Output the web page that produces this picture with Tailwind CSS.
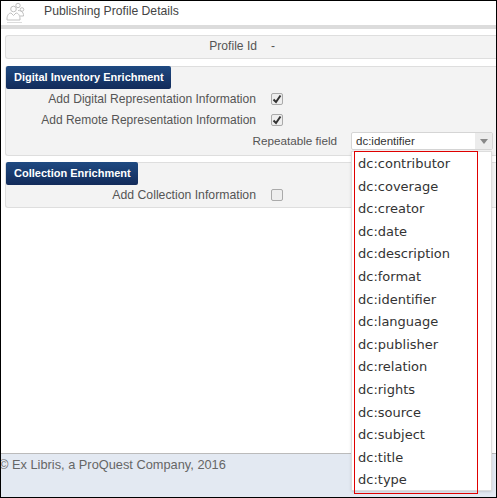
<!DOCTYPE html>
<html lang="en">
<head>
    <meta charset="UTF-8">
    <title>Publishing Profile Details</title>
    <script src="https://cdn.jsdelivr.net/npm/@tailwindcss/browser@4"></script>
</head>
<body class="bg-white">
    <div class="relative w-[497px] h-[498px] overflow-hidden border border-black flex flex-col font-['Liberation_Sans',Arial,sans-serif] text-[12.100px] text-[#555]">
        <!-- header -->
        <div class="h-[24px] shrink-0 flex items-center border-b-[4px] border-[#dcdcdc] box-content">
            <svg class="ml-[4px] w-[20px] h-[22px]" viewBox="0 0 20 22" fill="none" stroke="#c0c0c0" stroke-width="1">
                <circle cx="8.500" cy="7" r="2.800"/>
                <circle cx="13" cy="3.500" r="2.200"/>
                <circle cx="17" cy="7.500" r="1.800"/>
                <path d="M2 17c0-4 2-6 4-6l2.500 2.500L11 11c2 0 4 2 4 6v1H2z"/>
                <path d="M13 8.500c2 0 4 .5 5 2.500.5 1 .5 2 .5 3H15"/>
                <path d="M2 20.500h15" stroke="#dcdcdc"/>
            </svg>
            <span class="ml-[19px] text-[12.200px] text-[#444] relative top-[-2px]">Publishing Profile Details</span>
        </div>

        <div class="pl-[4px] pt-[6px] flex-1 flex flex-col">
            <div class="h-[24px] pb-[2px] bg-[#f3f3f3] border border-r-0 border-[#dedede] rounded-l-[3px] flex items-center">
                <span class="w-[251px] text-right">Profile Id</span>
                <span class="ml-[14px]">-</span>
            </div>

            <!-- digital inventory -->
            <div class="mt-[7px] h-[90px] bg-[#f3f3f3] border border-r-0 border-[#dedede] rounded-l-[3px]">
                <div class="w-[165px] h-[23px] -mt-px bg-gradient-to-b from-[#1f4a82] to-[#122b5a] rounded-[2px] flex items-center pl-[8px] whitespace-nowrap text-[11px] font-bold text-white">Digital Inventory Enrichment</div>
                <div class="h-[20px] flex items-center">
                    <span class="w-[250px] text-right">Add Digital Representation Information</span>
                    <span class="ml-[15px] w-[12px] h-[12px] border border-[#aaa] rounded-[2px] bg-[#eee] flex items-center justify-center">
                        <svg class="w-[10px] h-[10px]" viewBox="0 0 10 10"><path d="M1.500 5.500 4 8l4.500-6.500" fill="none" stroke="#333" stroke-width="2"/></svg>
                    </span>
                </div>
                <div class="h-[21px] flex items-center">
                    <span class="w-[250px] text-right text-[12px]">Add Remote Representation Information</span>
                    <span class="ml-[15px] w-[12px] h-[12px] border border-[#aaa] rounded-[2px] bg-[#eee] flex items-center justify-center">
                        <svg class="w-[10px] h-[10px]" viewBox="0 0 10 10"><path d="M1.500 5.500 4 8l4.500-6.500" fill="none" stroke="#333" stroke-width="2"/></svg>
                    </span>
                </div>
                <div class="h-[22px] flex items-center">
                    <span class="w-[331px] text-right text-[11.700px]">Repeatable field</span>
                    <div class="ml-[14px] w-[142px] h-[18px] flex border border-[#d5d5d5] rounded-[2px] bg-white">
                        <span class="flex-1 pl-[4px] text-[#333] text-[11.500px] leading-[17px]">dc:identifier</span>
                        <span class="w-[17px] bg-[#ececec] flex items-center justify-center">
                            <span class="border-x-[4px] border-x-transparent border-t-[5px] border-t-[#888]"></span>
                        </span>
                    </div>
                </div>
            </div>

            <!-- collection -->
            <div class="mt-[6px] h-[46px] bg-[#f3f3f3] border border-r-0 border-[#dedede] rounded-l-[3px]">
                <div class="w-[132px] h-[23px] -mt-px bg-gradient-to-b from-[#1f4a82] to-[#122b5a] rounded-[2px] flex items-center pl-[8px] whitespace-nowrap text-[11px] font-bold text-white">Collection Enrichment</div>
                <div class="h-[20px] flex items-center">
                    <span class="w-[250px] text-right text-[12.250px]">Add Collection Information</span>
                    <span class="ml-[15px] w-[12px] h-[12px] border border-[#aaa] rounded-[2px] bg-[#eee]"></span>
                </div>
            </div>
        </div>

        <!-- footer -->
        <div class="h-[44px] shrink-0 bg-[#e3e9f2] border-t border-[#bbb] pt-[1px] text-[12.800px] text-[#666] whitespace-nowrap"><span class="-ml-[2px] block">© Ex Libris, a ProQuest Company, 2016</span></div>

        <!-- dropdown list -->
        <div class="absolute left-[350px] top-[150px] w-[141px] h-[340px] bg-white border border-[#ddd] shadow-sm">
            <div class="ml-[2px] -mt-px w-[124px] h-[343px] border border-[#e00000] pt-[1px] font-['DejaVu_Sans',sans-serif] text-[13px] text-[#333]">
                <div class="h-[22.600px] leading-[22.600px] pl-[3px]">dc:contributor</div>
                <div class="h-[22.600px] leading-[22.600px] pl-[3px]">dc:coverage</div>
                <div class="h-[22.600px] leading-[22.600px] pl-[3px]">dc:creator</div>
                <div class="h-[22.600px] leading-[22.600px] pl-[3px]">dc:date</div>
                <div class="h-[22.600px] leading-[22.600px] pl-[3px]">dc:description</div>
                <div class="h-[22.600px] leading-[22.600px] pl-[3px]">dc:format</div>
                <div class="h-[22.600px] leading-[22.600px] pl-[3px]">dc:identifier</div>
                <div class="h-[22.600px] leading-[22.600px] pl-[3px]">dc:language</div>
                <div class="h-[22.600px] leading-[22.600px] pl-[3px]">dc:publisher</div>
                <div class="h-[22.600px] leading-[22.600px] pl-[3px]">dc:relation</div>
                <div class="h-[22.600px] leading-[22.600px] pl-[3px]">dc:rights</div>
                <div class="h-[22.600px] leading-[22.600px] pl-[3px]">dc:source</div>
                <div class="h-[22.600px] leading-[22.600px] pl-[3px]">dc:subject</div>
                <div class="h-[22.600px] leading-[22.600px] pl-[3px]">dc:title</div>
                <div class="h-[22.600px] leading-[22.600px] pl-[3px]">dc:type</div>
            </div>
        </div>
    </div>
</body>
</html>
